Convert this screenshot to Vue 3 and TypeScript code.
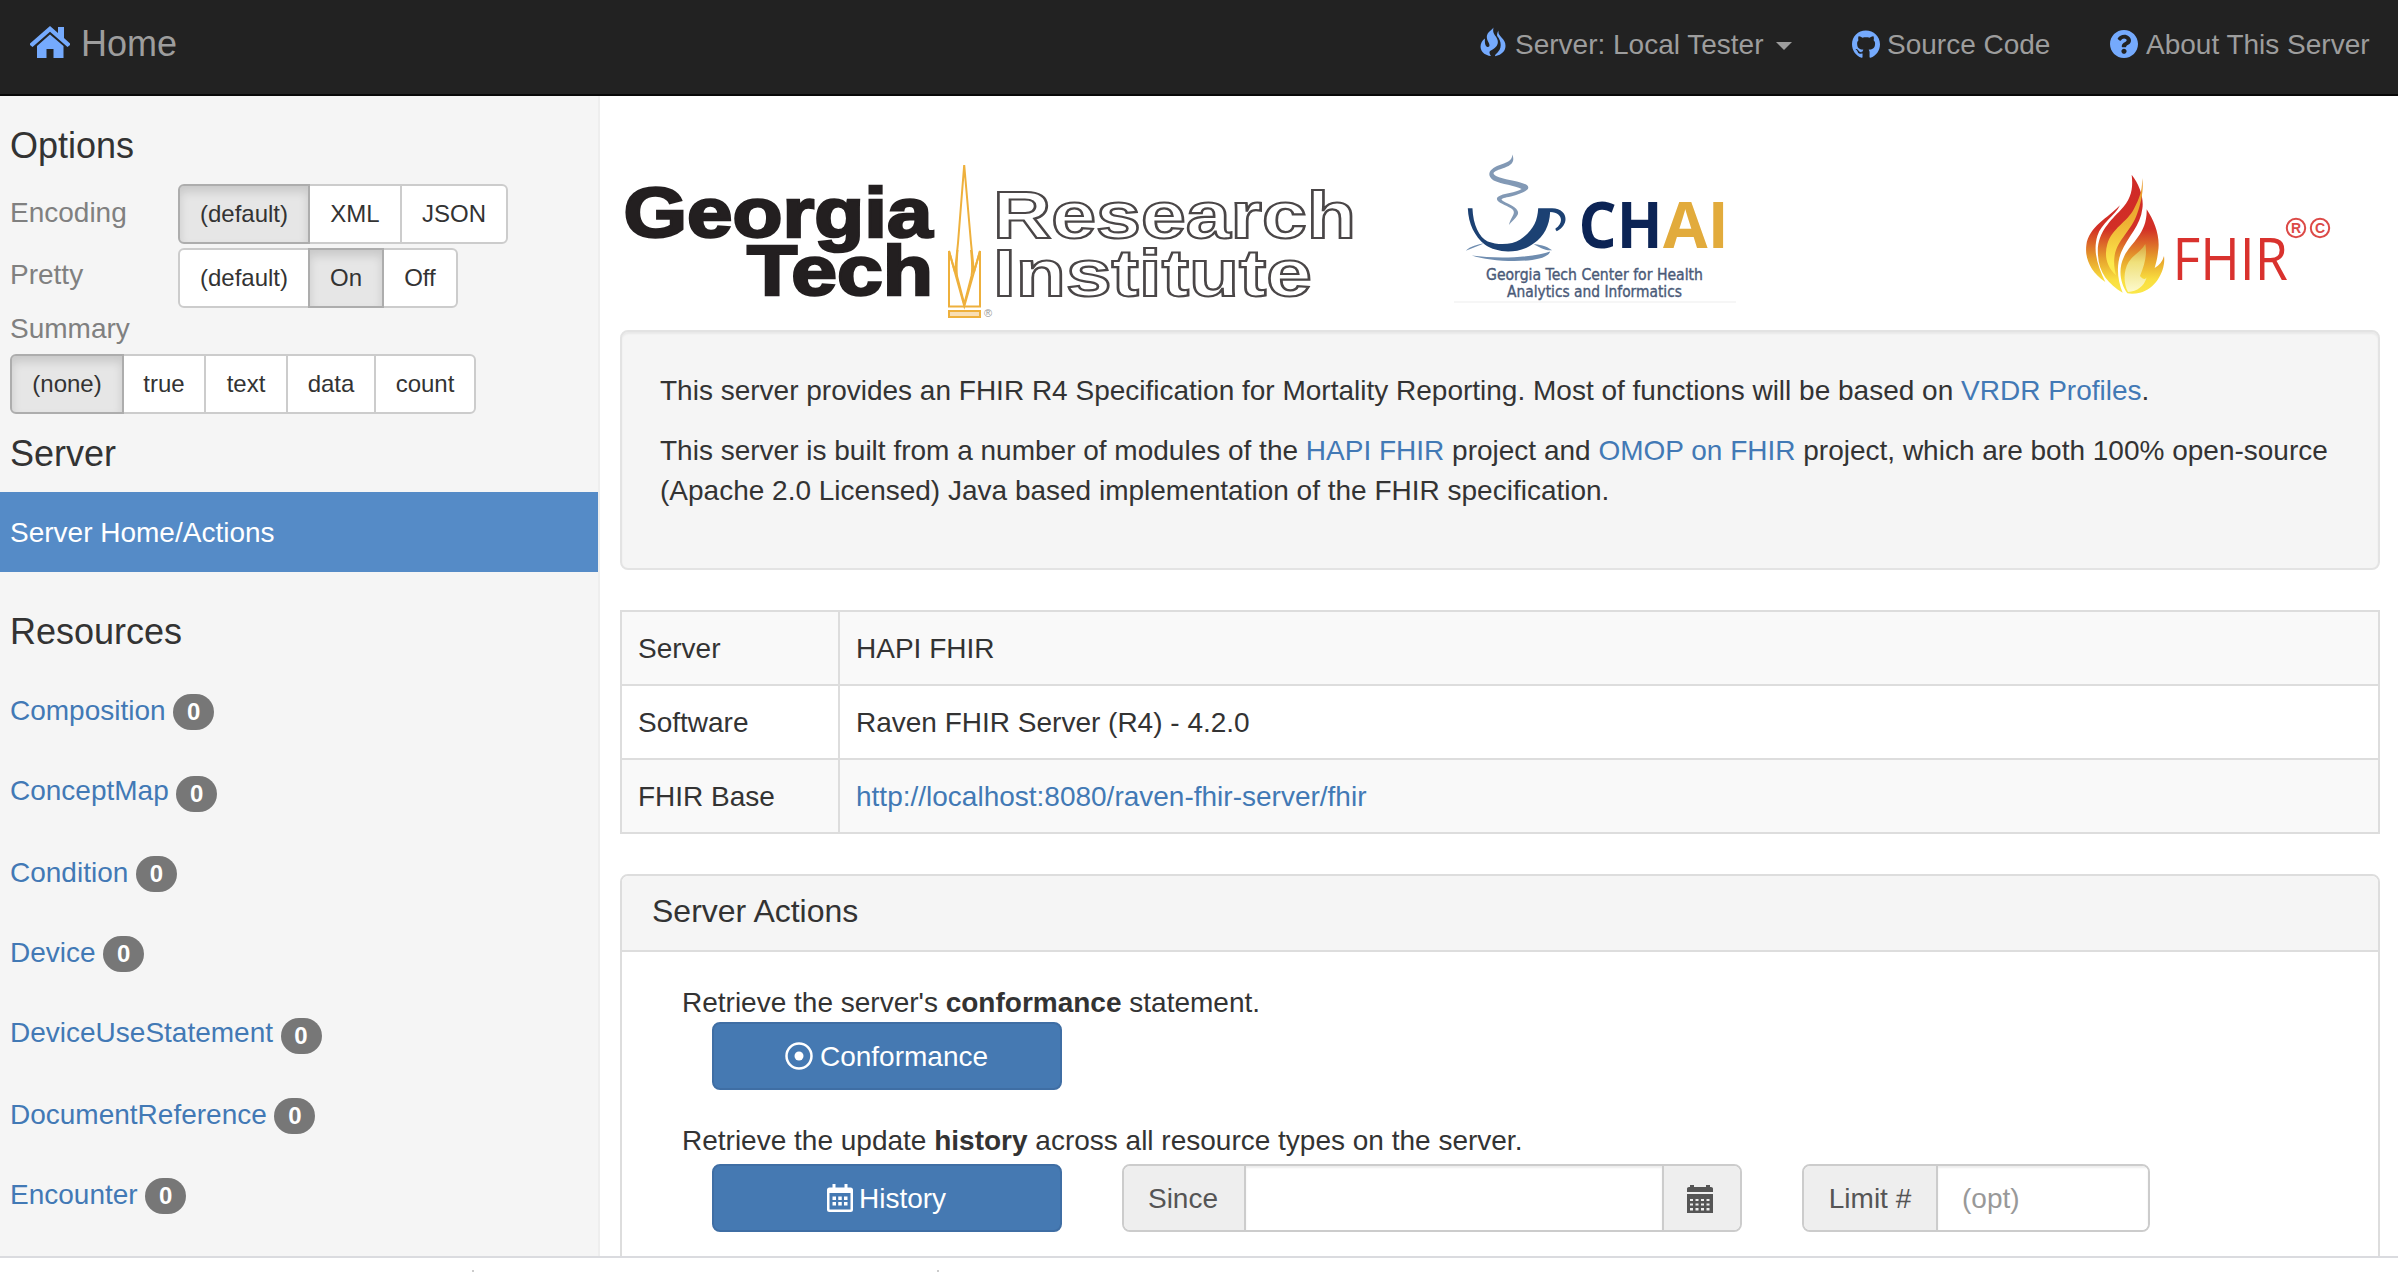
<script setup lang="ts">
import { ref } from 'vue'

interface OptionGroup {
  label: string
  key: string
  choices: { text: string; width: number }[]
  selected: number
}

const groups = ref<OptionGroup[]>([
  {
    label: 'Encoding',
    key: 'encoding',
    selected: 0,
    choices: [
      { text: '(default)', width: 132 },
      { text: 'XML', width: 94 },
      { text: 'JSON', width: 108 },
    ],
  },
  {
    label: 'Pretty',
    key: 'pretty',
    selected: 1,
    choices: [
      { text: '(default)', width: 132 },
      { text: 'On', width: 76 },
      { text: 'Off', width: 76 },
    ],
  },
  {
    label: 'Summary',
    key: 'summary',
    selected: 0,
    choices: [
      { text: '(none)', width: 114 },
      { text: 'true', width: 84 },
      { text: 'text', width: 84 },
      { text: 'data', width: 90 },
      { text: 'count', width: 102 },
    ],
  },
])

const resources = [
  { name: 'Composition', count: 0 },
  { name: 'ConceptMap', count: 0 },
  { name: 'Condition', count: 0 },
  { name: 'Device', count: 0 },
  { name: 'DeviceUseStatement', count: 0 },
  { name: 'DocumentReference', count: 0 },
  { name: 'Encounter', count: 0 },
]

const since = ref('')
const limit = ref('')
</script>

<template>
  <div class="page">
    <header class="navbar">
      <a class="brand">
        <svg class="home-icon" viewBox="0 0 40 32">
          <path d="M20 0 L28 7 V1 H34 V12 L40 17.5 V19 L37.5 21 L20 5.8 L2.5 21 L0 19 V17.5 Z" />
          <path d="M20 8.5 L33.5 20 V32 H23.5 V23 H16.5 V32 H7 V20 Z" />
        </svg>
        <span>Home</span>
      </a>
      <nav class="links">
        <a class="link tester">
          <svg class="fire" viewBox="0 0 26 30">
            <path d="M13.500 .5 C13 3 12.800 5.500 15 8.500 C18 12 19 16 16.200 19.500 C14.500 22 11.500 23 10 24 C9 25.500 9.500 27 11 29 C8 28.800 4.500 27.500 2.500 25 C-1 20.500 .5 14.500 5 11.500 C4.500 16 5.300 19.500 7.300 20 C9.800 20.500 10 18 8.600 15.500 C6.500 12 6 8.500 8.500 5.500 C10 3.500 12.500 2.500 13.500 .5 Z" />
            <path d="M18.500 3.500 C18 7 19.500 8 21.500 10.500 C24.500 13.500 26.500 17 25 22 C23.500 26 19.500 28.500 15 29.200 C15 27.200 17.800 26 19.600 22.800 C21.800 18.500 20.500 12.500 17.200 9 C16.800 7 17.500 5 18.500 3.500 Z" />
          </svg>
          <span>Server: Local Tester</span>
          <i class="caret"></i>
        </a>
        <a class="link source">
          <svg class="round" viewBox="0 0 496 496">
            <path d="M165.9 397.4c0 2-2.3 3.6-5.2 3.6-3.3.3-5.6-1.3-5.6-3.6 0-2 2.3-3.6 5.2-3.6 3-.3 5.6 1.3 5.6 3.6zM244.8 8C106.1 8 0 113.3 0 252c0 110.9 69.8 205.8 169.5 239.2 12.8 2.3 17.3-5.6 17.3-12.1 0-6.2-.3-40.4-.3-61.4 0 0-70 15-84.7-29.8 0 0-11.4-29.1-27.8-36.6 0 0-22.9-15.7 1.6-15.4 0 0 24.9 2 38.6 25.8 21.9 38.6 58.6 27.5 72.9 20.9 2.3-16 8.8-27.1 16-33.7-55.9-6.2-112.3-14.3-112.3-110.5 0-27.5 7.6-41.3 23.6-58.9-2.6-6.5-11.1-33.3 2.6-67.9 20.9-6.5 69 27 69 27 20-5.6 41.5-8.5 62.8-8.5s42.8 2.9 62.8 8.5c0 0 48.1-33.6 69-27 13.7 34.7 5.2 61.4 2.6 67.9 16 17.7 25.8 31.5 25.8 58.9 0 96.5-58.9 104.2-114.8 110.5 9.2 7.9 17 22.9 17 46.4 0 33.7-.3 75.4-.3 83.6 0 6.5 4.6 14.4 17.3 12.1C428.2 457.8 496 362.9 496 252 496 113.3 383.5 8 244.8 8z" />
          </svg>
          <span>Source Code</span>
        </a>
        <a class="link about">
          <svg class="round" viewBox="8 8 496 496">
            <path d="M504 256c0 136.997-111.043 248-248 248S8 392.997 8 256C8 119.083 119.043 8 256 8s248 111.083 248 248zM262.655 90c-54.497 0-89.255 22.957-116.549 63.758-3.536 5.286-2.353 12.415 2.715 16.258l34.699 26.31c5.205 3.947 12.621 3.008 16.665-2.122 17.864-22.658 30.113-35.797 57.303-35.797 20.429 0 45.698 13.148 45.698 32.958 0 14.976-12.363 22.667-32.534 33.976C247.128 238.528 216 254.941 216 296v4c0 6.627 5.373 12 12 12h56c6.627 0 12-5.373 12-12v-1.333c0-28.462 83.186-29.647 83.186-106.667 0-58.002-60.165-102-116.531-102zM256 338c-25.365 0-46 20.635-46 46 0 25.364 20.635 46 46 46s46-20.636 46-46c0-25.365-20.635-46-46-46z" />
          </svg>
          <span>About This Server</span>
        </a>
      </nav>
    </header>

    <div class="body">
      <aside class="sidebar">
        <h4 class="options-title">Options</h4>
        <div v-for="g in groups" :key="g.key" class="option" :class="g.key">
          <span class="option-label">{{ g.label }}</span>
          <div class="btn-group">
            <button
              v-for="(c, i) in g.choices"
              :key="c.text"
              class="btn"
              :class="{ active: g.selected === i }"
              :style="{ width: c.width + 'px' }"
              @click="g.selected = i"
            >{{ c.text }}</button>
          </div>
        </div>
        <h4 class="server-title">Server</h4>
        <a class="home-link">Server Home/Actions</a>
        <h4 class="resources-title">Resources</h4>
        <ul class="resources">
          <li v-for="r in resources" :key="r.name">
            <a>{{ r.name }}</a><span class="badge">{{ r.count }}</span>
          </li>
        </ul>
      </aside>

      <main class="main">
        <div class="logos">
          <svg class="logo-gt" viewBox="620 96 750 234">
            <g class="gt-solid">
              <text x="623.5" y="237" textLength="309" lengthAdjust="spacingAndGlyphs">Georgia</text>
              <text x="747" y="295" textLength="186" lengthAdjust="spacingAndGlyphs">Tech</text>
            </g>
            <g class="gt-outline">
              <text x="993" y="238" textLength="363" lengthAdjust="spacingAndGlyphs">Research</text>
              <text x="993" y="295.500" textLength="319" lengthAdjust="spacingAndGlyphs">Institute</text>
            </g>
            <g class="tower">
              <path d="M964.2 165 L971 243 L974 272 L980 251 V306.500 H949 V251 L955 272 L958 243 Z" />
              <path d="M957.500 250 Q956 268 957 276 L964.300 304 L971.500 276 Q973 268 971 250" />
              <path d="M949 251 L964.300 306 L980 251" />
              <path class="plinth" d="M949 311 H980 V317 H949 Z" />
            </g>
            <text class="gt-reg" x="984" y="317">®</text>
          </svg>

          <svg class="logo-chai" viewBox="1440 96 300 234">
            <g transform="translate(1420 130) scale(.332)">
              <path class="steam" d="M278 74 C288 98 272 108 248 116 C218 126 212 132 238 142 C266 152 304 154 322 166 C338 180 306 192 274 200 C242 206 238 208 258 218 C290 232 306 246 288 264 C282 272 274 276 268 286 C274 258 294 250 274 236 C258 224 222 216 234 202 C250 190 290 190 306 178 C286 166 246 164 222 152 C196 134 212 116 238 106 C262 98 278 94 278 74 Z" />
              <path class="saucer" d="M138 364 C150 350 176 344 192 342 C172 350 156 356 138 364 Z M398 362 C380 348 356 344 342 344 C360 352 374 364 398 362 Z M156 378 C230 388 330 386 392 366 C382 404 220 400 156 378 Z" />
              <path class="cup" d="M144 236 H158 C160 286 178 324 204 336 C236 348 278 346 302 330 C340 304 354 276 356 236 H398 C448 238 450 286 412 305 C409 303 408 300 408 297 C434 280 430 248 392 247 C390 288 374 320 342 342 C300 374 232 372 196 346 C164 320 146 284 144 236 Z" />
            </g>
            <g class="chai-word">
              <text class="navy" x="1578.500" y="248" textLength="84" lengthAdjust="spacingAndGlyphs">CH</text>
              <text class="gold" x="1663" y="248" textLength="66" lengthAdjust="spacingAndGlyphs">AI</text>
            </g>
            <g class="chai-sub">
              <text x="1486" y="280" textLength="217" lengthAdjust="spacingAndGlyphs">Georgia Tech Center for Health</text>
              <text x="1507" y="296.500" textLength="175" lengthAdjust="spacingAndGlyphs">Analytics and Informatics</text>
            </g>
            <path class="chai-line" d="M1454 302 H1736" />
          </svg>

          <svg class="logo-fhir" viewBox="2060 96 290 234">
            <defs>
              <linearGradient id="flame" gradientUnits="userSpaceOnUse" x1="0" y1="76" x2="0" y2="432">
                <stop offset="0" stop-color="#cf2a27" />
                <stop offset=".45" stop-color="#d22f26" />
                <stop offset=".7" stop-color="#e6a02c" />
                <stop offset=".88" stop-color="#f9de3f" />
                <stop offset="1" stop-color="#fbe84a" />
              </linearGradient>
              <linearGradient id="flame-mid" gradientUnits="userSpaceOnUse" x1="0" y1="100" x2="0" y2="340">
                <stop offset="0" stop-color="#e99a2b" />
                <stop offset=".5" stop-color="#eeb234" />
                <stop offset="1" stop-color="#fdea4c" />
              </linearGradient>
              <linearGradient id="flame-core" gradientUnits="userSpaceOnUse" x1="0" y1="280" x2="0" y2="420">
                <stop offset="0" stop-color="#d7a03a" />
                <stop offset=".4" stop-color="#efe07a" />
                <stop offset="1" stop-color="#fcf8c8" />
              </linearGradient>
            </defs>
            <g transform="translate(2040 150) scale(.33333)">
              <path fill="url(#flame)" d="M240 166 C226 196 184 220 172 258 C158 306 174 350 196 396 C152 366 134 326 139 286 C146 230 204 204 240 166 Z" />
              <path fill="url(#flame)" d="M275 74 C300 106 312 146 307 176 C302 226 262 262 244 306 C228 344 232 390 248 428 C206 404 176 368 174 316 C168 250 212 212 242 180 C274 146 280 116 275 74 Z" />
              <path fill="url(#flame-mid)" d="M306 84 C312 108 306 150 292 190 C276 240 232 270 224 316 C220 340 224 360 228 376 C200 350 192 318 202 282 C216 234 262 216 282 176 C300 142 308 118 306 84 Z" />
              <path fill="url(#flame)" d="M320 178 C344 214 362 262 354 306 C352 326 348 340 344 354 C358 346 368 334 372 318 C378 360 348 416 300 428 C286 432 272 432 262 430 C240 400 234 356 252 320 C272 278 322 252 320 178 Z" />
              <path fill="url(#flame-core)" d="M316 282 C322 314 314 344 300 378 C308 388 316 390 320 382 C312 410 292 424 264 426 C250 400 250 362 266 336 C282 312 304 304 316 282 Z" />
            </g>
            <text class="fhir-word" x="2172.500" y="280" textLength="115.500" lengthAdjust="spacingAndGlyphs">FHIR</text>
            <g class="fhir-marks">
              <circle cx="2296" cy="228" r="9.200" />
              <circle cx="2320" cy="228" r="9.200" />
              <text x="2296" y="233" text-anchor="middle">R</text>
              <text x="2320" y="233" text-anchor="middle">C</text>
            </g>
          </svg>
        </div>

        <section class="well">
          <p class="intro-a">This server provides an FHIR R4 Specification for Mortality Reporting. Most of functions will be based on <a>VRDR Profiles</a>.</p>
          <p class="intro-b">This server is built from a number of modules of the <a>HAPI FHIR</a> project and <a>OMOP on FHIR</a> project, which are both 100% open-source<br>(Apache 2.0 Licensed) Java based implementation of the FHIR specification.</p>
        </section>

        <div class="table">
          <div class="row"><div class="key">Server</div><div class="val">HAPI FHIR</div></div>
          <div class="row"><div class="key">Software</div><div class="val">Raven FHIR Server (R4) - 4.2.0</div></div>
          <div class="row"><div class="key">FHIR Base</div><div class="val"><a>http://localhost:8080/raven-fhir-server/fhir</a></div></div>
        </div>

        <section class="panel">
          <h3 class="panel-title">Server Actions</h3>
          <div class="panel-body">
            <p class="lead-a">Retrieve the server's <b>conformance</b> statement.</p>
            <div class="controls">
              <button class="primary">
                <svg class="dot" viewBox="0 0 28 28">
                  <circle cx="14" cy="14" r="12.500" fill="none" stroke="#fff" stroke-width="2.500" />
                  <circle cx="14" cy="14" r="4.500" fill="#fff" />
                </svg>
                <span>Conformance</span>
              </button>
            </div>
            <p class="lead-b">Retrieve the update <b>history</b> across all resource types on the server.</p>
            <div class="controls">
              <button class="primary history">
                <svg class="cal" viewBox="0 0 26 28">
                  <path fill="#fff" fill-rule="evenodd" d="M5.500 0 H8.500 V3.500 H17.500 V0 H20.500 V3.500 H23.500 Q26 3.500 26 6 V25.500 Q26 28 23.500 28 H2.500 Q0 28 0 25.500 V6 Q0 3.500 2.500 3.500 H5.500 Z M2.500 9 V25.500 H23.500 V9 Z" />
                  <path fill="#fff" d="M5.500 12.500h3.500v3.500h-3.500z M11.250 12.500h3.500v3.500h-3.500z M17 12.500h3.500v3.500h-3.500z M5.500 18h3.500v3.500h-3.500z M11.250 18h3.500v3.500h-3.500z M17 18h3.500v3.500h-3.500z" />
                </svg>
                <span>History</span>
              </button>
              <div class="input-group since">
                <span class="addon">Since</span>
                <input v-model="since" type="text">
                <span class="addon picker">
                  <svg viewBox="0 0 26 28">
                    <path fill="#555" d="M0 7 V3.500 Q0 2 2 2 H3 V0 H7 V2 H19 V0 H23 V2 H24 Q26 2 26 3.500 V7 Z" />
                    <path fill="#555" fill-rule="evenodd" d="M0 9 H26 V28 H0 Z M3 14 V16 H6 V14 Z M8.500 14 V16 H11.500 V14 Z M14 14 V16 H17 V14 Z M19.500 14 V16 H22.500 V14 Z M3 18.500 V20.500 H6 V18.500 Z M8.500 18.500 V20.500 H11.500 V18.500 Z M14 18.500 V20.500 H17 V18.500 Z M19.500 18.500 V20.500 H22.500 V18.500 Z M3 23 V25.500 H6 V23 Z M8.500 23 V25.500 H11.500 V23 Z M14 23 V25.500 H17 V23 Z M19.500 23 V25.500 H22.500 V23 Z" />
                  </svg>
                </span>
              </div>
              <div class="input-group limit">
                <span class="addon">Limit #</span>
                <input v-model="limit" type="text" placeholder="(opt)">
              </div>
            </div>
          </div>
        </section>
      </main>
    </div>

    <footer class="strip"><i></i><i></i></footer>
  </div>
</template>

<style>
html,
body {
  margin: 0;
  background: #fff;
}
</style>

<style scoped>
.page,
.page * {
  box-sizing: border-box;
}
.page {
  width: 2398px;
  height: 1272px;
  display: flex;
  flex-direction: column;
  overflow: hidden;
  background: #fff;
  color: #333;
  font: 28px/40px 'Liberation Sans', Arial, sans-serif;
}
h3,
h4,
p,
ul {
  margin: 0;
  padding: 0;
  font-weight: 400;
}
a {
  color: #4279b5;
}
button,
input {
  font-family: inherit;
  letter-spacing: inherit;
}
span,
a {
  white-space: nowrap;
}

.navbar {
  flex: none;
  height: 96px;
  display: flex;
  justify-content: space-between;
  background: #222;
  border-bottom: 2px solid #080808;
}
.navbar a {
  color: #9d9d9d;
}
.navbar svg {
  flex: none;
  fill: #75aafd;
}
.brand {
  display: flex;
  align-items: flex-start;
  padding: 24px 0 0 30px;
  font-size: 36px;
}
.home-icon {
  width: 40px;
  height: 32px;
  margin: 2px 11px 0 0;
}
.links {
  display: flex;
  margin-right: 28px;
  gap: 60px;
  padding-top: 25px;
}
.link {
  display: flex;
  align-items: flex-start;
}
.tester {
  width: 312px;
}
.source {
  width: 198px;
}
.about {
  width: 260px;
}
.fire {
  width: 26px;
  height: 30px;
  margin: 2px 9px 0 0;
}
.round {
  width: 28px;
  height: 28px;
  margin: 5px 8px 0 0;
}
.source .round {
  margin-right: 7px;
}
.caret {
  margin: 17px 0 0 auto;
  border: 8px solid transparent;
  border-top-color: #9d9d9d;
  border-bottom: 0;
}

.body {
  flex: none;
  height: 1160px;
  display: flex;
  overflow: hidden;
}
.sidebar {
  width: 600px;
  flex: none;
  background: #f5f5f5;
  border-right: 2px solid #eee;
}
h4 {
  font-size: 36px;
  line-height: 40px;
  padding-left: 10px;
}
.options-title {
  margin-top: 30px;
  margin-bottom: 18px;
}
.option {
  display: flex;
  padding-left: 10px;
  height: 60px;
  margin-bottom: 4px;
}
.option-label {
  width: 168px;
  color: #808080;
  padding-top: 9px;
}
.pretty .option-label {
  padding-top: 7px;
}
.option.pretty {
  margin-bottom: 1px;
}
.option.summary {
  flex-direction: column;
  height: 105px;
  margin: 0;
}
.summary .option-label {
  padding: 0;
  height: 45px;
}
.btn-group {
  display: flex;
}
.btn {
  height: 60px;
  padding: 0;
  border: 2px solid #ccc;
  background: #fff;
  color: #333;
  font-size: 24px;
  line-height: 36px;
  text-align: center;
}
.btn + .btn {
  margin-left: -2px;
}
.btn:first-child {
  border-radius: 6px 0 0 6px;
}
.btn:last-child {
  border-radius: 0 6px 6px 0;
}
.btn.active {
  position: relative;
  background: #e6e6e6;
  border-color: #adadad;
  box-shadow: inset 0 6px 10px rgba(0, 0, 0, 0.125);
}
.server-title {
  margin-top: 20px;
  margin-bottom: 18px;
}
.home-link {
  display: block;
  height: 80px;
  padding: 21px 10px 0;
  background: #558bc7;
  color: #fff;
}
.resources-title {
  margin-top: 40px;
  margin-bottom: 39px;
}
.resources {
  list-style: none;
  padding-left: 10px;
}
.resources li {
  display: flex;
  align-items: flex-start;
  height: 80px;
}
.resources li:nth-child(3n + 2) {
  height: 82px;
}
.badge {
  width: 41px;
  height: 36px;
  margin: 3px 0 0 7.5px;
  border-radius: 20px;
  background: #777;
  color: #fff;
  font-size: 24px;
  font-weight: 700;
  line-height: 36px;
  text-align: center;
}
.resources li:nth-child(3n + 2) .badge {
  margin-top: 5px;
}

.main {
  width: 1780px;
  padding-left: 20px;
  flex: none;
}
.logos {
  display: flex;
  height: 234px;
}
.logos svg {
  flex: none;
  height: 234px;
}
.logo-gt {
  width: 750px;
}
.logo-chai {
  width: 300px;
  margin-left: 70px;
}
.logo-fhir {
  width: 290px;
  margin-left: 320px;
}
.gt-solid text {
  font: 700 70px 'Liberation Sans', Arial, sans-serif;
  fill: #231f20;
  stroke: #231f20;
  stroke-width: 2.5px;
}
.gt-outline text {
  font: 700 66px 'Liberation Sans', Arial, sans-serif;
  fill: #fff;
  stroke: #4a4647;
  stroke-width: 2.2px;
}
.tower path {
  fill: none;
  stroke: #eeb03c;
  stroke-width: 2px;
}
.tower .plinth {
  fill: #f8deb4;
}
.gt-reg {
  font: 11px 'Liberation Sans', Arial, sans-serif;
  fill: #999;
}
.steam {
  fill: #8299b5;
}
.saucer {
  fill: #6f8db0;
}
.cup {
  fill: #1c4173;
}
.chai-word text {
  font: 700 65px 'Open Sans', 'Noto Sans', sans-serif;
}
.navy {
  fill: #0c2455;
}
.gold {
  fill: #e2ab3c;
}
.chai-sub text {
  font: 15.5px 'DejaVu Sans', sans-serif;
  fill: #4a5a78;
  stroke: #4a5a78;
  stroke-width: 0.4px;
}
.chai-line {
  stroke: #f6f6f6;
  stroke-width: 2px;
}
.fhir-word {
  font: 59px 'Open Sans', 'Noto Sans', sans-serif;
  fill: #d9322e;
}
.fhir-marks circle {
  fill: none;
  stroke: #dc4a47;
  stroke-width: 2px;
}
.fhir-marks text {
  font: 700 14px 'Liberation Sans', Arial, sans-serif;
  fill: #dc4a47;
}

.well {
  height: 240px;
  padding: 39px 38px 0;
  border: 2px solid #e3e3e3;
  border-radius: 8px;
  background: #f5f5f5;
  box-shadow: inset 0 2px 2px rgba(0, 0, 0, 0.05);
}
.well p {
  margin-bottom: 20px;
  white-space: nowrap;
}
.table {
  margin-top: 40px;
  border: 2px solid #ddd;
}
.row {
  display: flex;
  height: 72px;
  background: #f9f9f9;
}
.row + .row {
  height: 74px;
  border-top: 2px solid #ddd;
}
.row:nth-child(2) {
  background: #fff;
}
.key {
  width: 216px;
  padding: 17px 16px 0;
}
.val {
  flex: 1;
  border-left: 2px solid #ddd;
  padding: 17px 16px 0;
}
.panel {
  margin-top: 40px;
  height: 500px;
  border: 2px solid #ddd;
  border-radius: 8px;
}
.panel-title {
  height: 76px;
  padding: 17px 30px 0;
  font-size: 32px;
  line-height: 36px;
  background: #f5f5f5;
  border-bottom: 2px solid #ddd;
  border-radius: 6px 6px 0 0;
}
.panel-body {
  padding: 31px 60px 0;
}
.lead-a {
  height: 39px;
}
.lead-b {
  margin-top: 31px;
  height: 43px;
}
.controls {
  display: flex;
  height: 68px;
  padding-left: 30px;
}
.primary {
  display: flex;
  justify-content: center;
  align-items: center;
  width: 350px;
  height: 68px;
  padding: 0 1px 0 0;
  background: #4579b2;
  border: 2px solid #3f6ea4;
  border-radius: 8px;
  color: #fff;
  font-size: 28px;
  line-height: 40px;
}
.primary span {
  padding-top: 1px;
}
.dot {
  width: 28px;
  height: 28px;
  margin-right: 7px;
}
.cal {
  width: 26px;
  height: 28px;
  margin-right: 6px;
}
.input-group {
  display: flex;
  height: 68px;
  margin-left: 60px;
  border: 2px solid #ccc;
  border-radius: 8px;
  overflow: hidden;
}
.since {
  width: 620px;
}
.limit {
  width: 348px;
}
.addon {
  flex: none;
  width: 122px;
  background: #eee;
  color: #555;
  border-right: 2px solid #ccc;
  text-align: center;
  line-height: 66px;
}
.since .addon {
  padding-right: 2px;
}
.limit .addon {
  width: 134px;
}
.since .picker {
  width: 78px;
  padding-right: 4px;
  border-right: 0;
  border-left: 2px solid #ccc;
  display: flex;
  align-items: center;
  justify-content: center;
}
.picker svg {
  width: 26px;
  height: 28px;
  margin-top: 2px;
}
input {
  flex: 1;
  min-width: 0;
  border: 0;
  padding: 2px 24px 0;
  font-size: 28px;
  outline: none;
  box-shadow: inset 0 2px 2px rgba(0, 0, 0, 0.075);
}
input::placeholder {
  color: #999;
}

.strip {
  flex: none;
  height: 16px;
  display: flex;
  align-items: flex-end;
  gap: 463px;
  padding-left: 472px;
  border-top: 2px solid #dadbdf;
  background: #fff;
}
.strip i {
  width: 2px;
  height: 2px;
  background: #ccc;
}
</style>
